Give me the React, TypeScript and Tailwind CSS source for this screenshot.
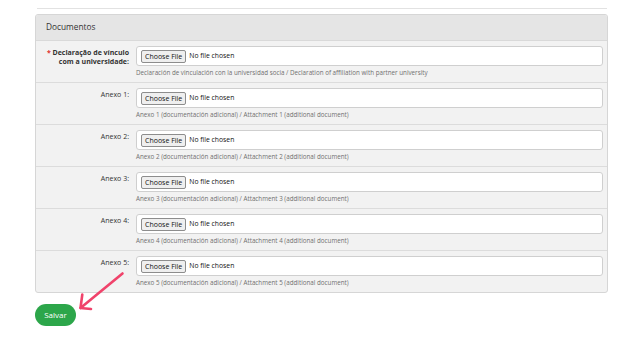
import React from "react";

interface Doc {
  label: React.ReactNode;
  help: string;
}

const docs: Doc[] = [
  {
    label: (
      <span className="font-bold">
        <span className="text-[#e0312f]">* </span>Declaração de vínculo
        <br />
        com a universidade:
      </span>
    ),
    help: "Declaración de vinculación con la universidad socia / Declaration of affiliation with partner university",
  },
  ...[1, 2, 3, 4, 5].map((n) => ({
    label: <span>Anexo {n}:</span>,
    help: `Anexo ${n} (documentación adicional) / Attachment ${n} (additional document)`,
  })),
];

const FileField = () => (
  <div className="flex h-[20px] items-center rounded-[3px] border border-[#cfcfcf] bg-white pl-[4px]">
    <span className="flex h-[13px] items-center rounded-[2px] border border-[#8d8d8d] bg-[#efefef] px-[3px] text-[7px] leading-none text-[#111]">
      Choose File
    </span>
    <span className="ml-[3px] text-[6.8px] leading-none text-[#111]">
      No file chosen
    </span>
  </div>
);

const App = () => {
  return (
    <div className="relative h-[341px] w-[632px] overflow-hidden bg-white font-['Open_Sans',sans-serif] text-[#333]">
      <div className="pl-[37px] pt-[8px]">
        <div className="h-px w-[570px] bg-[#e2e2e2]" />
      </div>

      <div className="ml-[35px] mt-[5px] w-[573px] overflow-hidden rounded-[3px] border border-[#d6d6d6] bg-[#f2f2f2]">
        <div className="flex h-[26px] items-center border-b border-[#d9d9d9] bg-[#e5e5e5] px-[10px] text-[8.3px]">
          Documentos
        </div>
        {docs.map((d, i) => (
          <div
            key={i}
            className={`flex pb-[4px] pt-[5px] ${i > 0 ? "border-t border-[#dcdcdc]" : ""}`}
          >
            <div className="w-[93px] pt-[2px] text-right text-[7px] leading-[9px] text-[#333]">
              {d.label}
            </div>
            <div className="ml-[7px] w-[467px]">
              <FileField />
              <div className="mt-[2px] text-[6.25px] leading-[10px] text-[#707070]">
                {d.help}
              </div>
            </div>
          </div>
        ))}
      </div>

      <button className="ml-[35px] mt-[11px] flex h-[22px] w-[41px] items-center justify-center rounded-full bg-[#2ca64a] text-[8px] text-white">
        Salvar
      </button>

      <svg
        className="pointer-events-none absolute left-0 top-0"
        width="632"
        height="341"
        viewBox="0 0 632 341"
      >
        <g
          stroke="#f0436b"
          strokeWidth="2.6"
          strokeLinecap="round"
          strokeLinejoin="round"
          fill="none"
        >
          <path d="M122.5 273.5 L80.5 308" />
          <path d="M82.3 294.5 L80.5 308 L91 309" />
        </g>
      </svg>
    </div>
  );
};

export default App;
